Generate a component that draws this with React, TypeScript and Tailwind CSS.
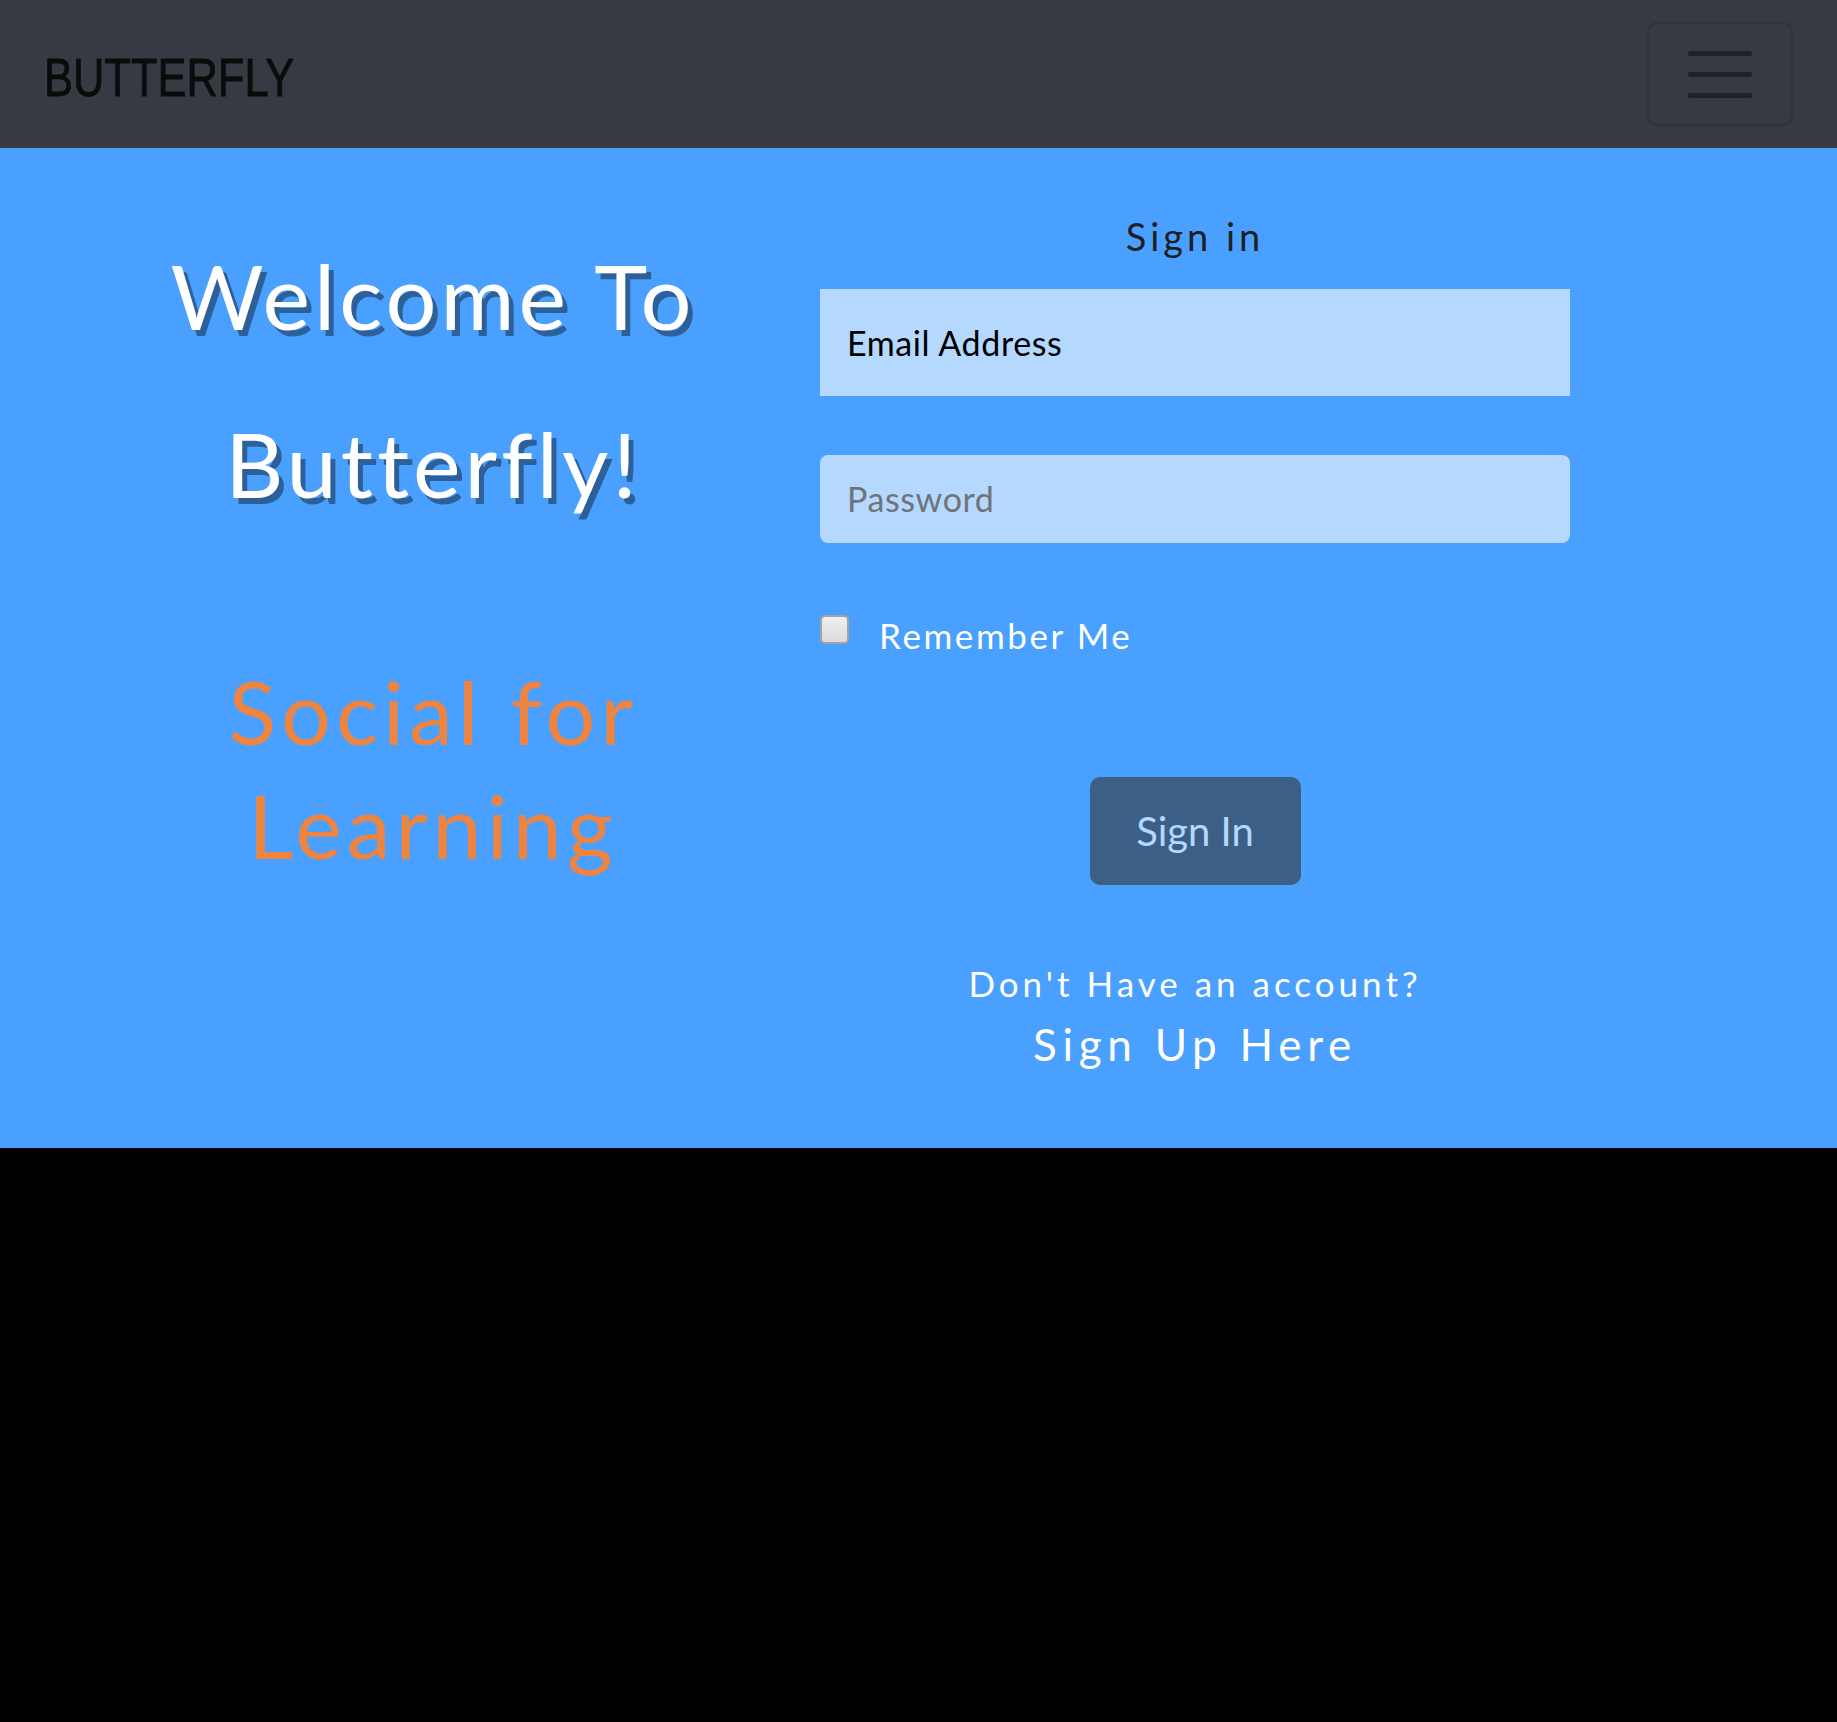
import React from "react";

export default function App() {
  return (
    <div className="min-h-[1722px] w-full bg-black" style={{ fontFamily: "Lato, 'Noto Sans', sans-serif" }}>
      <nav className="flex h-[148px] items-center justify-between bg-[#363a42] pl-[44px] pr-[44px]">
        <div
          className="mt-[6px] origin-left scale-x-[0.82] text-[53px] leading-none text-[#0b0b0b] [-webkit-text-stroke:0.8px_#0b0b0b]"
          style={{ fontFamily: "'Liberation Sans', Arial, sans-serif" }}
        >
          BUTTERFLY
        </div>
        <button className="flex h-[104px] w-[146px] flex-col items-center justify-center gap-[16px] rounded-[10px] border-2 border-[#2f333a]">
          <span className="block h-[5px] w-[64px] rounded-full bg-[#1e2125]" />
          <span className="block h-[5px] w-[64px] rounded-full bg-[#1e2125]" />
          <span className="block h-[5px] w-[64px] rounded-full bg-[#1e2125]" />
        </button>
      </nav>

      <section className="flex h-[1000px] bg-[#4aa0fe]">
        <div className="ml-[108px] flex w-[650px] flex-col items-center text-center">
          <h1
            className="mt-[63px] text-[90px] leading-[168px] tracking-[4px] text-white [font-variant-ligatures:none]"
            style={{ textShadow: "5px 6px 0 #2d5f98" }}
          >
            Welcome To
            <br />
            Butterfly!
          </h1>
          <p className="mt-[107px] text-[88px] leading-[114px] tracking-[5px] text-[#ef8440]">
            Social for
            <br />
            Learning
          </p>
        </div>

        <div className="ml-[62px] flex w-[750px] flex-col">
          <h2 className="mt-[66px] text-center text-[38px] leading-[1.2] tracking-[4px] text-[#1c1f24]">Sign in</h2>
          <div className="mt-[29px] flex h-[107px] items-center bg-[#b5d8ff] pl-[27px] text-[34px] tracking-[0.6px] text-black">
            Email Address
          </div>
          <div className="mt-[59px] flex h-[88px] items-center rounded-[8px] bg-[#b5d8ff] pl-[27px] text-[34px] tracking-[0.6px] text-[#6f7479]">
            Password
          </div>
          <div className="mt-[71px] flex items-start">
            <span className="mt-[1px] block h-[29px] w-[29px] rounded-[5px] border-2 border-[#a3a3a3] bg-[linear-gradient(#efefef,#dcdcdc)]" />
            <span className="ml-[30px] text-[35px] leading-[42px] tracking-[2.6px] text-white">Remember Me</span>
          </div>
          <div className="mt-[121px] flex justify-center">
            <button className="h-[108px] w-[211px] rounded-[10px] bg-[#3c5f86] text-[40px] text-[#b3d7ff]">
              Sign In
            </button>
          </div>
          <p className="mt-[77px] text-center text-[35px] leading-[42px] tracking-[4px] text-white">
            Don't Have an account?
          </p>
          <p className="mt-[14px] text-center text-[44px] leading-[1.2] tracking-[5.75px] text-white">Sign Up Here</p>
        </div>
      </section>
    </div>
  );
}
